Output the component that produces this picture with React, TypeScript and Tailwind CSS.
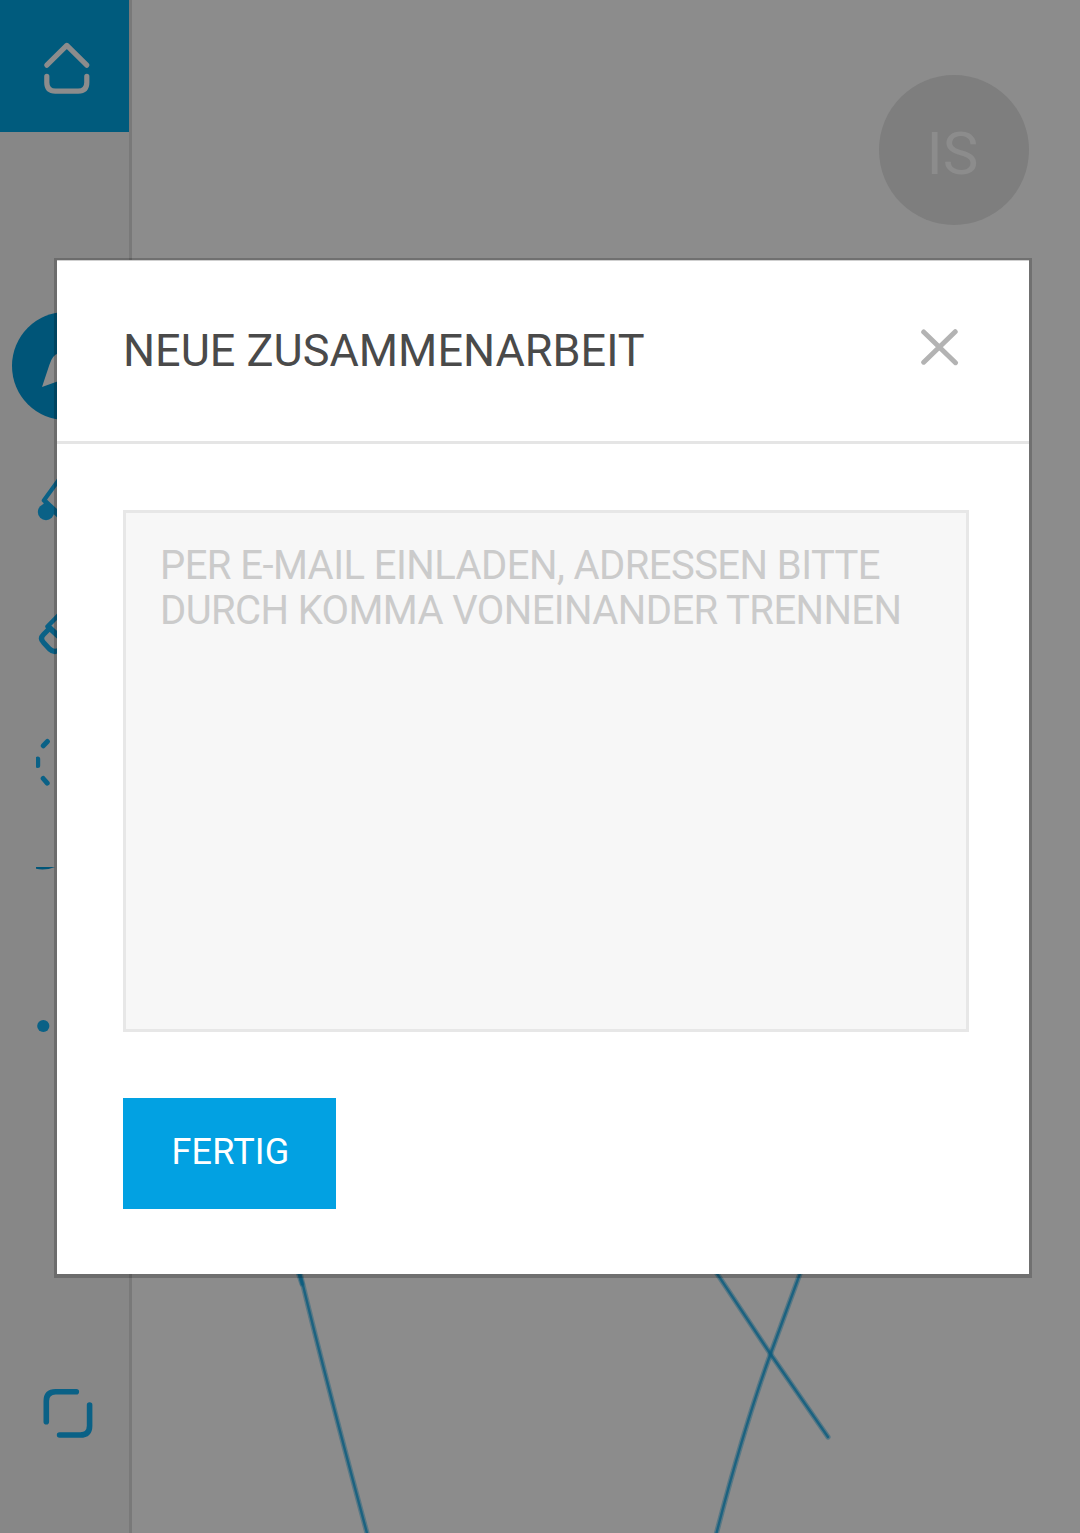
import React from "react";

const INK = "#0a6186";

function SidebarSlot({ children }: { children?: React.ReactNode }) {
  return <div className="flex h-[132px] w-[132px] shrink-0 items-center justify-center">{children}</div>;
}

function HomeIcon() {
  return (
    <svg className="h-[60px] w-[60px]" viewBox="36 36 60 60" fill="none" stroke="#8c8c8c" strokeWidth="5.2" strokeLinecap="round" strokeLinejoin="round">
      <path d="M46.800 65.200 66.800 45.400 86.800 65.200" />
      <path d="M46.800 76.300v6.200q0 8.600 8.600 8.600h22.800q8.600 0 8.600-8.600v-6.200" />
    </svg>
  );
}

function CompassIcon() {
  return (
    <svg className="h-[60px] w-[60px]" viewBox="36 336 60 60" fill="#8c8c8c">
      <path d="M42 387 49.500 364.500Q52.500 355 58 353.500L86 345 79 370Q78 374 74 375.500Z" />
    </svg>
  );
}

function BrushIcon() {
  return (
    <svg className="h-[60px] w-[60px]" viewBox="36 468 60 60" fill="none" stroke={INK} strokeWidth="4.200" strokeLinejoin="round">
      <path d="M43.800 500.500 63 474 79 491 59 514Z" />
      <path d="M45 502 59 515" strokeWidth="6" />
      <circle cx="46" cy="512" r="8.200" fill={INK} stroke="none" />
    </svg>
  );
}

function EraserIcon() {
  return (
    <svg className="h-[60px] w-[60px]" viewBox="36 600 60 60" fill="none" stroke={INK} strokeLinejoin="round">
      <path d="M47.500 626.500 73 600.500 88 618 65 643Z" strokeWidth="4.500" />
      <path d="M50 628 43.500 634.500Q39.500 638.500 43.500 642.500L49.500 649Q55 654 60 649L66 643Z" strokeWidth="5.200" />
    </svg>
  );
}

function LassoIcon() {
  return (
    <svg className="h-[60px] w-[60px] overflow-hidden" viewBox="36 732 60 60" fill="none" stroke={INK} strokeWidth="5" strokeLinecap="round">
      <path d="M47.400 741.500 43.300 745.800M37.700 759v6.500M43.200 778.500 47.200 783.200M63 735h6M85 741l4 4M94 759v6M88 779l-4 4M63 789h6" />
    </svg>
  );
}

function CurveIcon() {
  return (
    <svg className="h-[54px] w-[60px] overflow-hidden" viewBox="36 867 60 54">
      <path d="M36 867H55Q45 871 36 868.800Z" fill="#005578" />
    </svg>
  );
}

function DotsIcon() {
  return (
    <svg className="h-[60px] w-[60px]" viewBox="36 996 60 60" fill={INK}>
      <circle cx="43.300" cy="1026" r="6.100" />
      <circle cx="66" cy="1026" r="6.100" />
      <circle cx="88.700" cy="1026" r="6.100" />
    </svg>
  );
}

function FullscreenIcon() {
  return (
    <svg className="h-[60px] w-[60px]" viewBox="36 1383 60 60" fill="none" stroke={INK} strokeWidth="5.600" strokeLinecap="round">
      <path d="M46.300 1421.700V1401q0-9.300 9.300-9.300H76.300" />
      <path d="M89.600 1405V1425.700q0 9.300-9.300 9.300H59.600" />
    </svg>
  );
}

function Sidebar() {
  return (
    <aside className="flex h-full w-[132px] shrink-0 flex-col border-r-[3px] border-[#797979] bg-[#878787]">
      <div className="h-[132px] w-[129px] shrink-0 bg-[#005b7d]">
        <SidebarSlot>
          <HomeIcon />
        </SidebarSlot>
      </div>
      <nav className="mt-[168px] flex flex-col">
        <SidebarSlot>
          <div className="flex h-[108px] w-[108px] items-center justify-center rounded-full bg-[#005578]">
            <CompassIcon />
          </div>
        </SidebarSlot>
        <SidebarSlot><BrushIcon /></SidebarSlot>
        <SidebarSlot><EraserIcon /></SidebarSlot>
        <SidebarSlot><LassoIcon /></SidebarSlot>
        <SidebarSlot><CurveIcon /></SidebarSlot>
        <SidebarSlot><DotsIcon /></SidebarSlot>
      </nav>
      <div className="mt-auto mb-[54px]">
        <SidebarSlot><FullscreenIcon /></SidebarSlot>
      </div>
    </aside>
  );
}

const STROKES = [
  "M297 1260Q318 1350 367.500 1535",
  "M294 1260 302 1284",
  "M708 1260 770.500 1354 828 1437",
  "M805 1260Q792 1296 770.500 1354 743 1430 716 1535",
];

function Canvas() {
  return (
    <main className="flex h-full grow flex-col justify-between">
      <div className="flex justify-end pt-[75px] pr-[51px]">
        <div className="flex h-[150px] w-[150px] items-center justify-center rounded-full bg-[#7e7e7e] pt-[8px] pr-[3px] text-[60px] leading-none text-[#8c8c8c]">
          IS
        </div>
      </div>
      <svg className="block h-[273px] w-[948px]" viewBox="132 1260 948 273" fill="none" stroke="#0c5c7e" strokeLinecap="round">
        {STROKES.map((d) => (
          <g key={d}>
            <path d={d} strokeWidth="5.200" opacity="0.4" />
            <path d={d} strokeWidth="2.400" opacity="0.8" />
          </g>
        ))}
      </svg>
    </main>
  );
}

function InviteDialog() {
  return (
    <section
      role="dialog"
      aria-label="Neue Zusammenarbeit"
      className="absolute top-[258px] left-[54px] flex h-[1020px] w-[978px] flex-col border-x-[3px] border-t-2 border-b-4 border-black/20 bg-white bg-clip-padding"
    >
      <header className="flex h-[184px] shrink-0 items-start justify-between border-t border-b-[3px] border-t-[#cfcfcf] border-b-[#e5e5e5] pt-[63px] pr-[70px] pl-[66px]">
        <h1 className="text-[45px] leading-[53px] whitespace-nowrap text-[#4a4a4a]">NEUE ZUSAMMENARBEIT</h1>
        <button aria-label="Schließen" className="mt-[3px]">
          <svg className="block h-[40px] w-[40px]" viewBox="919 327 40 40" stroke="#b3b3b3" strokeWidth="5" strokeLinecap="round">
            <path d="M923.700 332 955.500 362.700M955.200 331.700 923.700 362.200" />
          </svg>
        </button>
      </header>
      <div className="flex flex-col items-start px-[66px] pt-[66px]">
        <div className="h-[522px] w-[846px] border-[3px] border-[#e7e7e7] bg-[#f7f7f7] px-[34px] pt-[30px] text-[40px] leading-[45px] whitespace-nowrap text-[#cbcbcb]">
          <p className="tracking-[-0.57px]">PER E-MAIL EINLADEN, ADRESSEN BITTE</p>
          <p className="tracking-[-0.61px]">DURCH KOMMA VONEINANDER TRENNEN</p>
        </div>
        <button className="mt-[66px] h-[111px] w-[213px] bg-[#02a1e2] pb-[4px] pl-[2px] text-[36px] leading-[42px] tracking-[0.2px] text-white">FERTIG</button>
      </div>
    </section>
  );
}

export default function App() {
  return (
    <div className="relative flex h-[1533px] w-[1080px] overflow-hidden bg-[#8c8c8c] font-['Roboto',sans-serif]">
      <Sidebar />
      <Canvas />
      <InviteDialog />
    </div>
  );
}
